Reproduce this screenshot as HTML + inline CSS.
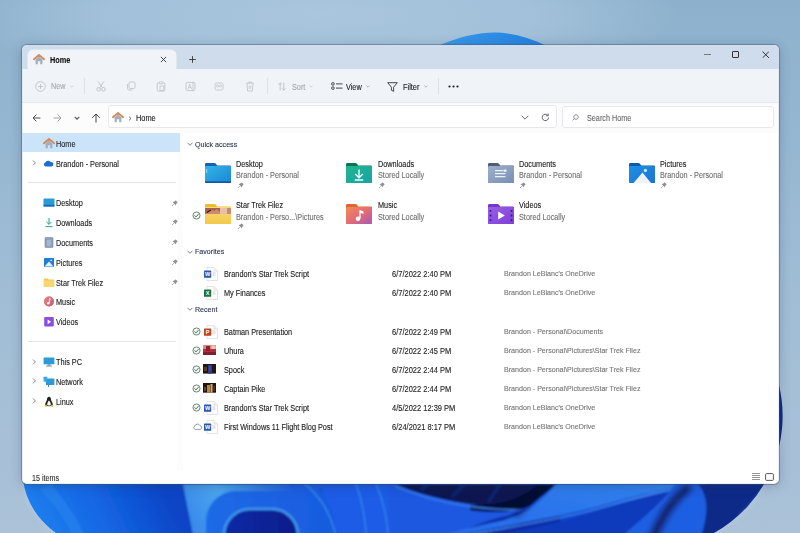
<!DOCTYPE html>
<html><head><meta charset="utf-8">
<style>
*{margin:0;padding:0;box-sizing:border-box}
html,body{width:800px;height:533px;overflow:hidden;background:#8fb2ce;font-family:"Liberation Sans",sans-serif;color:#1b1b1b}
#wall{position:absolute;left:0;top:0;width:800px;height:533px}
#win{position:absolute;left:22px;top:45px;width:757px;height:439px;border-radius:5px;overflow:hidden;background:#fff;box-shadow:0 0 0 1px rgba(70,80,95,.42),0 2px 12px rgba(30,50,80,.28)}
#win:after{content:"";position:absolute;left:0;top:0;right:0;bottom:0;border-radius:5px;border:1px solid rgba(215,225,242,.55);pointer-events:none}
.abs{position:absolute}
.t{position:absolute;white-space:nowrap;font-size:7.5px;line-height:10px;-webkit-text-stroke:.12px currentColor;transform-origin:0 50%;transform:scaleX(.88)}
#title{left:0;top:0;width:757px;height:24px;background:#cedceb}
#toolbar{left:0;top:24px;width:757px;height:34px;background:#f0f3f8;border-bottom:1px solid #e3e8ef}
#addr{left:0;top:58px;width:757px;height:30px;background:#fcfcfd}
#side{left:0;top:88px;width:157px;height:341px;background:#fff}
#content{left:157px;top:88px;width:600px;height:341px;background:#fff}
#status{left:0;top:424px;width:757px;height:15px;background:#fff}
</style></head><body>
<svg id="wall" width="800" height="533" viewBox="0 0 800 533">
  <defs>
    <linearGradient id="bg" x1="0" y1="0" x2="0" y2="1">
      <stop offset="0" stop-color="#8db1cd"/>
      <stop offset="0.55" stop-color="#a0bdd5"/>
      <stop offset="1" stop-color="#abc2d8"/>
    </linearGradient>
    <linearGradient id="bL" gradientUnits="userSpaceOnUse" x1="40" y1="540" x2="160" y2="480">
      <stop offset="0" stop-color="#1d80ee"/>
      <stop offset="0.5" stop-color="#1466e4"/>
      <stop offset="1" stop-color="#0a44c6"/>
    </linearGradient>
    <linearGradient id="dome" x1="0" y1="0" x2="1" y2="0">
      <stop offset="0" stop-color="#3a9ae8"/>
      <stop offset="1" stop-color="#2280e0"/>
    </linearGradient>
    <linearGradient id="band" x1="0" y1="1" x2="1" y2="0">
      <stop offset="0" stop-color="#2466ec"/>
      <stop offset="1" stop-color="#3284ec"/>
    </linearGradient>
    <linearGradient id="a1" x1="0" y1="0" x2="1" y2="0">
      <stop offset="0" stop-color="#1f6ae6"/>
      <stop offset="1" stop-color="#1656dc"/>
    </linearGradient>
    <linearGradient id="a2" x1="0" y1="0" x2="1" y2="0">
      <stop offset="0" stop-color="#0c2aa8"/>
      <stop offset="1" stop-color="#0a1c8a"/>
    </linearGradient>
    <radialGradient id="glow" gradientUnits="userSpaceOnUse" cx="320" cy="15" r="360" gradientTransform="translate(320 15) scale(1 .2) translate(-320 -15)">
      <stop offset="0" stop-color="#a9c6de" stop-opacity="1"/>
      <stop offset=".6" stop-color="#a6c3db" stop-opacity=".85"/>
      <stop offset="1" stop-color="#a6c3db" stop-opacity="0"/>
    </radialGradient>
    <linearGradient id="band1" gradientUnits="userSpaceOnUse" x1="185" y1="540" x2="290" y2="484">
      <stop offset="0" stop-color="#3580e8"/>
      <stop offset=".45" stop-color="#4aa6ee"/>
      <stop offset="1" stop-color="#1f5fe0"/>
    </linearGradient>
    <filter id="bl" x="-5%" y="-5%" width="110%" height="110%"><feGaussianBlur stdDeviation="0.9"/></filter>
    <filter id="bl2" x="-20%" y="-20%" width="140%" height="140%"><feGaussianBlur stdDeviation="3"/></filter>
    <clipPath id="bloomclip"><path d="M23 480 C26 502 38 520 56 533 L714 533 A134 134 0 0 0 779 385 L779 360 Z"/></clipPath>
  </defs>
  <rect width="800" height="533" fill="url(#bg)"/>
  <rect x="0" y="0" width="800" height="120" fill="url(#glow)"/>
  <path d="M23 480 C26 502 38 520 56 533 L714 533 A134 134 0 0 0 779 385 L779 360 Z" fill="#d0deeb" filter="url(#bl2)" opacity=".35"/>
  <path d="M438 46 C460 36 480 32.5 494 32.5 C510 32.5 528 37 547 46 Z" fill="url(#dome)"/>
  <g clip-path="url(#bloomclip)" filter="url(#bl)">
    <rect x="0" y="360" width="800" height="200" fill="#0d45cc"/>
    <rect x="700" y="360" width="100" height="124" fill="#0c2a84"/>
    <rect x="0" y="470" width="200" height="90" fill="url(#bL)"/>
    <path d="M40 490 C55 505 68 520 75 545 L88 545 C80 520 66 503 52 484 Z" fill="#3a96f4" opacity=".3"/>
    <path d="M183 484 Q187 505 195 545 L320 545 L320 484 Z" fill="url(#band1)"/>
    <!-- arch 1 -->
    <rect x="206" y="491" width="170" height="90" rx="30" fill="url(#a1)"/>
    <!-- arch 2 -->
    <rect x="224" y="509" width="74" height="60" rx="26" fill="url(#a2)" stroke="#3f96ee" stroke-width="2.6"/>
    <!-- petals 300-400 -->
    <path d="M318 484 L395 484 C392 500 390 515 392 545 L340 545 C334 515 328 498 318 484 Z" fill="#1b5ce6"/>
    <path d="M305 484 C322 498 332 515 338 545" fill="none" stroke="#3a8cf0" stroke-width="1.3"/>
    <path d="M356 484 C362 500 365 515 367 545" fill="none" stroke="#3c8ef2" stroke-width="1.1"/>
    <path d="M376 484 C383 500 387 515 389 545" fill="none" stroke="#3c8ef2" stroke-width="1.1"/>
    <!-- region 390-560 -->
    <path d="M388 484 L560 484 L560 545 L392 545 Z" fill="#1b58e0"/>
    <path d="M395 484 C425 497 470 507 520 508 C538 500 548 492 556 484 Z" fill="#081450"/>
    <path d="M430 484 L420 490 M465 484 L452 497 M500 484 L488 503" stroke="#10236e" stroke-width="4"/>
    <path d="M470 510 C495 514 515 512 530 506 C540 498 548 490 556 484 L540 484 C520 500 500 506 470 505 Z" fill="#040a30"/>
    <path d="M395 486 C428 500 472 510 522 510" fill="none" stroke="#3a7cf0" stroke-width="1.6"/>
    <path d="M440 545 C470 522 500 518 520 512 C540 504 550 496 560 484 L560 545 Z" fill="#0a2fa8"/>
    <!-- bright sweeping band -->
    <path d="M420 545 C480 528 540 522 600 506 C640 494 670 488 705 484 L556 484 C545 498 530 512 505 520 C480 526 450 530 420 545 Z" fill="url(#band)"/>
    <path d="M420 545 C480 530 545 524 600 508 C640 496 670 489 705 484" fill="none" stroke="#4a94f4" stroke-width="1.3"/>
    <path d="M460 545 C530 528 560 524 600 510 C640 498 670 490 705 484 L705 545 Z" fill="#0b3bbb"/>
    <path d="M540 484 C535 495 528 505 515 516" fill="none" stroke="#06103e" stroke-width="3" filter="url(#bl2)"/>
    <!-- right petal -->
    <path d="M612 545 C640 520 660 505 675 484 L705 484 C712 500 708 520 700 545 Z" fill="#1f5fe2"/>
    <path d="M650 545 C662 515 672 500 690 486" fill="none" stroke="#071450" stroke-width="7" filter="url(#bl2)"/>
    <path d="M698 484 C710 498 708 518 698 545 L717 545 C745 512 765 490 779 460 L790 484 Z" fill="#0d2c88"/>
    <path d="M712 545 C738 515 756 500 772 475" fill="none" stroke="#14379a" stroke-width="3"/>
  </g>
  </svg>
<div id="win">
  <div id="title" class="abs"></div>
  <!-- tab -->
  <div class="abs" style="left:6px;top:5px;width:148px;height:19px;background:#f0f3f8;border-radius:5px 5px 0 0;box-shadow:0 0 0 .5px rgba(255,255,255,.6)"></div>
  <svg class="abs" style="left:11px;top:9px" width="12" height="11" viewBox="0 0 12 11">
    <path d="M1 5.2 L6 1 L11 5.2" fill="none" stroke="#d48c5e" stroke-width="2" stroke-linejoin="round" stroke-linecap="round"/>
    <path d="M2.6 5.6 L6 2.8 L9.4 5.6 V10.2 H7.2 V7.3 H4.8 V10.2 H2.6Z" fill="#a3adbd"/>
  </svg>
  <div class="t" style="left:27.6px;top:9.6px;font-weight:700;font-size:8.30px;color:#111">Home</div>
  <svg class="abs" style="left:138px;top:11px" width="7" height="7" viewBox="0 0 7 7"><path d="M.9 .9L6.1 6.1M6.1 .9L.9 6.1" stroke="#333" stroke-width=".9"/></svg>
  <svg class="abs" style="left:167px;top:11px" width="7" height="7" viewBox="0 0 7 7"><path d="M3.5 .2V6.8M.2 3.5H6.8" stroke="#333" stroke-width=".9"/></svg>
  <!-- window controls -->
  <div class="abs" style="left:682px;top:8.5px;width:7px;height:.8px;background:#7a7a7a"></div>
  <div class="abs" style="left:710.2px;top:6px;width:6.8px;height:6.6px;border:1px solid #333;border-radius:1px"></div>
  <svg class="abs" style="left:739.5px;top:5.5px" width="7.5" height="7.5" viewBox="0 0 7.5 7.5"><path d="M.6 .6L6.9 6.9M6.9 .6L.6 6.9" stroke="#222" stroke-width=".9"/></svg>

  <div id="toolbar" class="abs"></div>
  <!-- New -->
  <svg class="abs" style="left:12.5px;top:35.5px" width="11" height="11" viewBox="0 0 11 11"><circle cx="5.5" cy="5.5" r="4.8" fill="none" stroke="#b9bdc4" stroke-width=".8"/><path d="M5.5 3V8M3 5.5H8" stroke="#b9bdc4" stroke-width=".8"/></svg>
  <div class="t" style="left:29px;top:36.6px;color:#a6a9ae;font-size:8.18px">New</div>
  <svg class="abs" style="left:47.5px;top:39.5px" width="4" height="3" viewBox="0 0 4 3"><path d="M.4 .6L2 2.2L3.6 .6" fill="none" stroke="#b9bdc4" stroke-width=".6"/></svg>
  <div class="abs" style="left:61.5px;top:33px;width:.7px;height:16px;background:#dde1e7"></div>
  <!-- cut -->
  <svg class="abs" style="left:73.5px;top:35.5px" width="10" height="11" viewBox="0 0 10 11"><circle cx="2.6" cy="8.3" r="1.8" fill="none" stroke="#b6bcc4" stroke-width=".8"/><circle cx="7.4" cy="8.3" r="1.8" fill="none" stroke="#b6bcc4" stroke-width=".8"/><path d="M3.6 6.8L7.8 .5M6.4 6.8L2.2 .5" stroke="#b6bcc4" stroke-width=".8"/></svg>
  <!-- copy -->
  <svg class="abs" style="left:104px;top:36px" width="10" height="10" viewBox="0 0 10 10"><rect x="3" y="1" width="6" height="6.5" rx="1.2" fill="none" stroke="#bcc1c8" stroke-width=".8"/><path d="M1.5 3V7.5A1.5 1.5 0 0 0 3 9H6.5" fill="none" stroke="#bcc1c8" stroke-width=".8"/></svg>
  <!-- paste -->
  <svg class="abs" style="left:134px;top:35.5px" width="10" height="11" viewBox="0 0 10 11"><rect x="1.2" y="1.8" width="7.6" height="8.4" rx="1.2" fill="none" stroke="#bcc1c8" stroke-width=".8"/><rect x="3.3" y=".8" width="3.4" height="2" rx=".6" fill="#f0f3f8" stroke="#bcc1c8" stroke-width=".7"/><rect x="4" y="5" width="3.5" height="4.5" fill="none" stroke="#bcc1c8" stroke-width=".7"/></svg>
  <!-- rename -->
  <svg class="abs" style="left:163px;top:35.5px" width="11" height="11" viewBox="0 0 11 11"><rect x="1" y="1.5" width="9" height="8" rx="1.2" fill="none" stroke="#bcc1c8" stroke-width=".8"/><path d="M3 8L4.8 3L6.6 8M3.6 6.4H6" fill="none" stroke="#bcc1c8" stroke-width=".7"/><path d="M8 .5V10.5" stroke="#bcc1c8" stroke-width=".8"/></svg>
  <!-- share -->
  <svg class="abs" style="left:192px;top:36px" width="10" height="10" viewBox="0 0 10 10"><rect x="1" y="2" width="8" height="7" rx="1.5" fill="none" stroke="#bcc1c8" stroke-width=".8"/><circle cx="3.5" cy="5" r="1.1" fill="none" stroke="#bcc1c8" stroke-width=".7"/><circle cx="6.5" cy="5" r="1.1" fill="none" stroke="#bcc1c8" stroke-width=".7"/></svg>
  <!-- delete -->
  <svg class="abs" style="left:223px;top:35.5px" width="10" height="11" viewBox="0 0 10 11"><path d="M1 2.2H9M3.8 2.2V1H6.2V2.2M2 2.2L2.6 10H7.4L8 2.2" fill="none" stroke="#bcc1c8" stroke-width=".8"/><path d="M4.2 4.5V8M5.8 4.5V8" stroke="#bcc1c8" stroke-width=".7"/></svg>
  <div class="abs" style="left:244.5px;top:33px;width:.7px;height:16px;background:#dde1e7"></div>
  <!-- sort -->
  <svg class="abs" style="left:255.5px;top:36.5px" width="8" height="9" viewBox="0 0 8 9"><path d="M2.2 8.5V.8M.4 2.6L2.2 .8L4 2.6M5.8 .5V8.2M4 6.4L5.8 8.2L7.6 6.4" fill="none" stroke="#b6bcc4" stroke-width=".8"/></svg>
  <div class="t" style="left:269.5px;top:36.8px;color:#a6a9ae;font-size:8.30px">Sort</div>
  <svg class="abs" style="left:287px;top:39.5px" width="4" height="3" viewBox="0 0 4 3"><path d="M.4 .6L2 2.2L3.6 .6" fill="none" stroke="#b9bdc4" stroke-width=".6"/></svg>
  <!-- view -->
  <svg class="abs" style="left:308.5px;top:37px" width="12" height="8" viewBox="0 0 12 8"><rect x=".6" y=".6" width="2.6" height="2.6" rx="1.2" fill="none" stroke="#333" stroke-width=".9"/><rect x=".6" y="4.8" width="2.6" height="2.6" rx="1.2" fill="none" stroke="#333" stroke-width=".9"/><path d="M5 1.9H11.5M5 6.1H11.5" stroke="#333" stroke-width=".9"/></svg>
  <div class="t" style="left:324.2px;top:36.5px;color:#1b1b1b;font-size:8.30px">View</div>
  <svg class="abs" style="left:344px;top:39.5px" width="4" height="3" viewBox="0 0 4 3"><path d="M.4 .6L2 2.2L3.6 .6" fill="none" stroke="#888" stroke-width=".6"/></svg>
  <!-- filter -->
  <svg class="abs" style="left:365.3px;top:36.5px" width="11" height="10" viewBox="0 0 11 10"><path d="M.7 .7H10.3L6.6 5.2V9.3L4.4 8.2V5.2Z" fill="none" stroke="#333" stroke-width=".9" stroke-linejoin="round"/></svg>
  <div class="t" style="left:380.6px;top:36.5px;color:#1b1b1b;font-size:8.41px">Filter</div>
  <svg class="abs" style="left:401.5px;top:39.5px" width="4" height="3" viewBox="0 0 4 3"><path d="M.4 .6L2 2.2L3.6 .6" fill="none" stroke="#888" stroke-width=".6"/></svg>
  <div class="abs" style="left:416.4px;top:33px;width:.7px;height:16px;background:#dde1e7"></div>
  <!-- more -->
  <svg class="abs" style="left:426px;top:39.5px" width="11" height="3" viewBox="0 0 11 3"><circle cx="1.5" cy="1.5" r="1.1" fill="#222"/><circle cx="5.5" cy="1.5" r="1.1" fill="#222"/><circle cx="9.5" cy="1.5" r="1.1" fill="#222"/></svg>

  <div id="addr" class="abs"></div>
  <!-- nav arrows -->
  <svg class="abs" style="left:9.5px;top:68.5px" width="9" height="8" viewBox="0 0 9 8"><path d="M8.4 4H1M4.4 .6L1 4L4.4 7.4" fill="none" stroke="#444" stroke-width=".95"/></svg>
  <svg class="abs" style="left:31px;top:68.5px" width="9" height="8" viewBox="0 0 9 8"><path d="M.6 4H8M4.6 .6L8 4L4.6 7.4" fill="none" stroke="#9a9a9a" stroke-width=".9"/></svg>
  <svg class="abs" style="left:51.5px;top:70.5px" width="6" height="4" viewBox="0 0 6 4"><path d="M.7 .8L3 3.1L5.3 .8" fill="none" stroke="#555" stroke-width="1.15"/></svg>
  <svg class="abs" style="left:68.8px;top:67.5px" width="10" height="10" viewBox="0 0 10 10"><path d="M5 9.5V1M1.2 4.8L5 1L8.8 4.8" fill="none" stroke="#333" stroke-width=".9"/></svg>
  <!-- address box -->
  <div class="abs" style="left:86px;top:59.5px;width:449px;height:23.5px;background:#fff;border:1px solid #e6e8eb;border-radius:3px"></div>
  <svg class="abs" style="left:90px;top:67px" width="12" height="11" viewBox="0 0 12 11">
    <path d="M1 5.2 L6 1 L11 5.2" fill="none" stroke="#d48c5e" stroke-width="2" stroke-linejoin="round" stroke-linecap="round"/>
    <path d="M2.6 5.6 L6 2.8 L9.4 5.6 V10.2 H7.2 V7.3 H4.8 V10.2 H2.6Z" fill="#a3adbd"/>
  </svg>
  <svg class="abs" style="left:105.5px;top:70.5px" width="4" height="5" viewBox="0 0 4 5"><path d="M1 .6L3 2.5L1 4.4" fill="none" stroke="#444" stroke-width=".8"/></svg>
  <div class="t" style="left:114px;top:67.5px;font-size:8.41px;color:#1b1b1b">Home</div>
  <svg class="abs" style="left:499px;top:70px" width="8" height="5" viewBox="0 0 8 5"><path d="M.7 .8L4 4.1L7.3 .8" fill="none" stroke="#555" stroke-width=".9"/></svg>
  <svg class="abs" style="left:519px;top:67.5px" width="9" height="9" viewBox="0 0 9 9"><path d="M7.6 4.5A3.2 3.2 0 1 1 6.6 2.1" fill="none" stroke="#555" stroke-width=".9"/><path d="M7.2 .6V2.8H5" fill="none" stroke="#555" stroke-width=".9"/></svg>
  <!-- search box -->
  <div class="abs" style="left:540.3px;top:61px;width:212px;height:22px;background:#fff;border:1px solid #e6e8eb;border-radius:3px"></div>
  <svg class="abs" style="left:549.5px;top:69px" width="7" height="7" viewBox="0 0 7 7"><circle cx="4" cy="3" r="2.3" fill="none" stroke="#777" stroke-width=".8"/><path d="M2.3 4.7L.6 6.4" stroke="#777" stroke-width=".8"/></svg>
  <div class="t" style="left:564.8px;top:68.5px;font-size:8.24px;color:#6b6b6b">Search Home</div>















<!--GEN--><div class="abs" style="left:154.5px;top:88px;width:6px;height:338px;background:#fcfcfc"></div>
<div class="abs" style="left:0;top:88.3px;width:157.5px;height:19.1px;background:#cce4f9"></div>
<svg class="abs" style="left:20.5px;top:92.8px" width="12" height="11" viewBox="0 0 12 11"><path d="M1 5.2 L6 1 L11 5.2" fill="none" stroke="#d48c5e" stroke-width="2" stroke-linejoin="round" stroke-linecap="round"/><path d="M2.6 5.6 L6 2.8 L9.4 5.6 V10.2 H7.2 V7.3 H4.8 V10.2 H2.6Z" fill="#a3adbd"/></svg>
<div class="t" style="left:33.7px;top:93.80px;font-size:8.30px;color:#1a1f2c;font-weight:400;">Home</div>
<svg class="abs" style="left:9.5px;top:115.3px" width="4" height="6" viewBox="0 0 4 6"><path d="M1 .5L3.4 2.9L1 5.3" fill="none" stroke="#808080" stroke-width=".95"/></svg>
<svg class="abs" style="left:21px;top:114.5px" width="11" height="7" viewBox="0 0 11 7"><path d="M2.6 6.6A2.2 2.2 0 0 1 2.3 2.4A3 3 0 0 1 7.6 2.1A2.3 2.3 0 0 1 8.6 6.6Z" fill="#1a6fd0"/></svg>
<div class="t" style="left:33.7px;top:113.50px;font-size:8.30px;color:#1b1b1b;font-weight:400;">Brandon - Personal</div>
<div class="abs" style="left:6px;top:137.1px;width:148px;height:.8px;background:#e2e4e7"></div>
<svg class="abs" style="left:21px;top:152.2px" width="12" height="11" viewBox="0 0 12 11"><rect x=".5" y="1.5" width="11" height="8" rx="1" fill="#2a9ad8"/><rect x=".5" y="7.8" width="11" height="1.7" fill="#1468b8"/></svg>
<div class="t" style="left:33.7px;top:153.20px;font-size:8.30px;color:#1b1b1b;font-weight:400;">Desktop</div>
<svg class="abs" style="left:148.5px;top:153.7px" width="8" height="8" viewBox="0 0 8 8"><path d="M4.6 1.2L6.8 3.4L6 3.8L4.9 5.8L5 6.5L1.5 3L2.2 3.1L4.2 2Z" fill="#8f8f8f"/><path d="M2.8 5.2L1 7" stroke="#9a9a9a" stroke-width=".8"/></svg>
<svg class="abs" style="left:21px;top:171.9px" width="12" height="11" viewBox="0 0 12 11"><path d="M6 1V7.2M3.4 4.8L6 7.4L8.6 4.8M2.5 9.6H9.5" fill="none" stroke="#1aa58a" stroke-width="1"/></svg>
<div class="t" style="left:33.7px;top:172.90px;font-size:8.30px;color:#1b1b1b;font-weight:400;">Downloads</div>
<svg class="abs" style="left:148.5px;top:173.4px" width="8" height="8" viewBox="0 0 8 8"><path d="M4.6 1.2L6.8 3.4L6 3.8L4.9 5.8L5 6.5L1.5 3L2.2 3.1L4.2 2Z" fill="#8f8f8f"/><path d="M2.8 5.2L1 7" stroke="#9a9a9a" stroke-width=".8"/></svg>
<svg class="abs" style="left:21px;top:191.5px" width="12" height="11" viewBox="0 0 12 11"><rect x="2" y=".6" width="8" height="10" rx=".8" fill="#8fa3bf"/><rect x="2" y=".6" width="8" height="10" rx=".8" fill="none" stroke="#6f84a3" stroke-width=".6"/><path d="M4 4H8M4 6H8M4 8H7" stroke="#dfe6ef" stroke-width=".6"/></svg>
<div class="t" style="left:33.7px;top:192.50px;font-size:8.30px;color:#1b1b1b;font-weight:400;">Documents</div>
<svg class="abs" style="left:148.5px;top:193px" width="8" height="8" viewBox="0 0 8 8"><path d="M4.6 1.2L6.8 3.4L6 3.8L4.9 5.8L5 6.5L1.5 3L2.2 3.1L4.2 2Z" fill="#8f8f8f"/><path d="M2.8 5.2L1 7" stroke="#9a9a9a" stroke-width=".8"/></svg>
<svg class="abs" style="left:21px;top:211.5px" width="12" height="11" viewBox="0 0 12 11"><rect x="1" y="1" width="10" height="9" rx=".8" fill="#1f7fd6"/><path d="M1.5 9.5L6 4.6L10.5 9.5Z" fill="#e6eef8"/><circle cx="8.2" cy="3.3" r=".9" fill="#cfe6fb"/></svg>
<div class="t" style="left:33.7px;top:212.50px;font-size:8.30px;color:#1b1b1b;font-weight:400;">Pictures</div>
<svg class="abs" style="left:148.5px;top:213px" width="8" height="8" viewBox="0 0 8 8"><path d="M4.6 1.2L6.8 3.4L6 3.8L4.9 5.8L5 6.5L1.5 3L2.2 3.1L4.2 2Z" fill="#8f8f8f"/><path d="M2.8 5.2L1 7" stroke="#9a9a9a" stroke-width=".8"/></svg>
<svg class="abs" style="left:21px;top:231.5px" width="12" height="11" viewBox="0 0 12 11"><path d="M.8 2.2Q.8 1.4 1.6 1.4H4.6L5.6 2.4H10.6Q11.2 2.4 11.2 3V9.4Q11.2 10 10.6 10H1.4Q.8 10 .8 9.4Z" fill="#f2c94c"/><rect x=".8" y="3.6" width="10.4" height="6.4" rx=".6" fill="#f7d774"/></svg>
<div class="t" style="left:33.7px;top:232.50px;font-size:8.30px;color:#1b1b1b;font-weight:400;">Star Trek Filez</div>
<svg class="abs" style="left:148.5px;top:233px" width="8" height="8" viewBox="0 0 8 8"><path d="M4.6 1.2L6.8 3.4L6 3.8L4.9 5.8L5 6.5L1.5 3L2.2 3.1L4.2 2Z" fill="#8f8f8f"/><path d="M2.8 5.2L1 7" stroke="#9a9a9a" stroke-width=".8"/></svg>
<svg class="abs" style="left:21px;top:251.2px" width="12" height="11" viewBox="0 0 12 11"><circle cx="6" cy="5.5" r="4.9" fill="#e0707a"/><circle cx="6" cy="5.5" r="4.9" fill="url(#musg)"/><path d="M6.4 2.6V7.2" stroke="#fff" stroke-width=".9"/><circle cx="5.2" cy="7.3" r="1.2" fill="#fff"/><path d="M6.4 2.6L8 3.4" stroke="#fff" stroke-width=".8"/></svg>
<div class="t" style="left:33.7px;top:252.20px;font-size:8.30px;color:#1b1b1b;font-weight:400;">Music</div>
<svg class="abs" style="left:21px;top:270.9px" width="12" height="11" viewBox="0 0 12 11"><rect x="1.2" y="1" width="9.6" height="9.6" rx="1" fill="#8a4fe0"/><path d="M4.6 3.4L8 5.8L4.6 8.2Z" fill="#fff"/></svg>
<div class="t" style="left:33.7px;top:271.90px;font-size:8.30px;color:#1b1b1b;font-weight:400;">Videos</div>
<div class="abs" style="left:6px;top:295.85px;width:148px;height:.8px;background:#e2e4e7"></div>
<svg class="abs" style="left:9.5px;top:313.7px" width="4" height="6" viewBox="0 0 4 6"><path d="M1 .5L3.4 2.9L1 5.3" fill="none" stroke="#808080" stroke-width=".95"/></svg>
<svg class="abs" style="left:21px;top:310.9px" width="12" height="11" viewBox="0 0 12 11"><rect x=".6" y="1.5" width="10.8" height="6.8" rx=".6" fill="#2a9ad8"/><rect x="4.5" y="8.3" width="3" height="1.4" fill="#6b8fb0"/><rect x="3" y="9.6" width="6" height=".9" fill="#6b8fb0"/></svg>
<div class="t" style="left:33.7px;top:311.90px;font-size:8.30px;color:#1b1b1b;font-weight:400;">This PC</div>
<svg class="abs" style="left:9.5px;top:333.3px" width="4" height="6" viewBox="0 0 4 6"><path d="M1 .5L3.4 2.9L1 5.3" fill="none" stroke="#808080" stroke-width=".95"/></svg>
<svg class="abs" style="left:21px;top:330.5px" width="12" height="11" viewBox="0 0 12 11"><rect x="3" y="2.5" width="8.4" height="6.5" rx=".5" fill="#2a9ad8"/><rect x=".6" y=".8" width="3.6" height="5" rx=".4" fill="#3aa8e4"/><path d="M5.5 9V11" stroke="#4a6f90" stroke-width=".9"/></svg>
<div class="t" style="left:33.7px;top:331.50px;font-size:8.30px;color:#1b1b1b;font-weight:400;">Network</div>
<svg class="abs" style="left:9.5px;top:353.3px" width="4" height="6" viewBox="0 0 4 6"><path d="M1 .5L3.4 2.9L1 5.3" fill="none" stroke="#808080" stroke-width=".95"/></svg>
<svg class="abs" style="left:21px;top:350.5px" width="12" height="11" viewBox="0 0 12 11"><path d="M6 .8C4.5.8 4 2.3 4 3.6C4 5 2.2 6.5 2.2 8.6C2.2 9.6 3 10.2 6 10.2C9 10.2 9.8 9.6 9.8 8.6C9.8 6.5 8 5 8 3.6C8 2.3 7.5.8 6 .8Z" fill="#222"/><path d="M6 4.5C5 5.5 4.2 7 4.2 8.4C4.2 9.3 5 9.5 6 9.5C7 9.5 7.8 9.3 7.8 8.4C7.8 7 7 5.5 6 4.5Z" fill="#f4f4f4"/><path d="M1.6 9.2L3.5 8.6L4.3 10.5L2.3 10.8Z M10.4 9.2L8.5 8.6L7.7 10.5L9.7 10.8Z" fill="#e6b422"/></svg>
<div class="t" style="left:33.7px;top:351.50px;font-size:8.30px;color:#1b1b1b;font-weight:400;">Linux</div>
<svg class="abs" style="left:164.5px;top:97.0px" width="6" height="4" viewBox="0 0 6 4"><path d="M.5 .8L3 3.3L5.5 .8" fill="none" stroke="#737885" stroke-width=".95"/></svg>
<div class="t" style="left:173.2px;top:94.70px;font-size:8.07px;color:#2a3350;font-weight:400;">Quick access</div>
<svg class="abs" style="left:164.5px;top:204.7px" width="6" height="4" viewBox="0 0 6 4"><path d="M.5 .8L3 3.3L5.5 .8" fill="none" stroke="#737885" stroke-width=".95"/></svg>
<div class="t" style="left:173.2px;top:202.40px;font-size:8.07px;color:#2a3350;font-weight:400;">Favorites</div>
<svg class="abs" style="left:164.5px;top:262.0px" width="6" height="4" viewBox="0 0 6 4"><path d="M.5 .8L3 3.3L5.5 .8" fill="none" stroke="#737885" stroke-width=".95"/></svg>
<div class="t" style="left:173.2px;top:259.70px;font-size:8.07px;color:#2a3350;font-weight:400;">Recent</div>
<svg class="abs" style="left:0;top:0" width="0" height="0"><defs>
<linearGradient id="gDesk" x1="0" y1="0" x2="1" y2="1"><stop offset="0" stop-color="#35b4e8"/><stop offset="1" stop-color="#1a86d2"/></linearGradient>
<linearGradient id="gDown" x1="0" y1="0" x2="1" y2="1"><stop offset="0" stop-color="#22b58e"/><stop offset="1" stop-color="#17a3a6"/></linearGradient>
<linearGradient id="gDoc" x1="0" y1="0" x2="1" y2="1"><stop offset="0" stop-color="#9db0ca"/><stop offset="1" stop-color="#7890b2"/></linearGradient>
<linearGradient id="gPic" x1="0" y1="0" x2="1" y2="1"><stop offset="0" stop-color="#1f8fe2"/><stop offset="1" stop-color="#1a74d4"/></linearGradient>
<linearGradient id="gMus" x1="0" y1="0" x2="1" y2="1"><stop offset="0" stop-color="#f58a54"/><stop offset=".55" stop-color="#e06a78"/><stop offset="1" stop-color="#a45ab8"/></linearGradient>
<linearGradient id="gVid" x1="0" y1="0" x2="1" y2="1"><stop offset="0" stop-color="#9a5fe8"/><stop offset="1" stop-color="#7d3fd6"/></linearGradient>
<linearGradient id="gStar" x1="0" y1="0" x2="0" y2="1"><stop offset="0" stop-color="#f9dc7c"/><stop offset="1" stop-color="#f3c84a"/></linearGradient>
<linearGradient id="musg" x1="0" y1="0" x2="1" y2="1"><stop offset="0" stop-color="#f0806a"/><stop offset="1" stop-color="#c45a8a"/></linearGradient>
</defs></svg>
<svg class="abs" style="left:182.6px;top:117.8px" width="26" height="20" viewBox="0 0 26 20"><path d="M0 1.4Q0 0 1.4 0H9.4Q10.2 0 10.7 .6L12.2 2.6H24.8Q26 2.6 26 3.8V18.8Q26 20 24.8 20H1.2Q0 20 0 18.8Z" fill="#1462b4"/><path d="M0 4.2Q0 2.9 1.3 2.9H24.7Q26 2.9 26 4.2V18.8Q26 20 24.8 20H1.2Q0 20 0 18.8Z" fill="url(#gDesk)"/><rect x="1" y="6" width="1.2" height="4" fill="#8fe0ff" opacity=".8"/><rect x="0" y="18.2" width="26" height="1.8" rx=".8" fill="#125aa8"/></svg>
<div class="t" style="left:214.3px;top:113.80px;font-size:8.30px;color:#1b1b1b;font-weight:400;">Desktop</div>
<div class="t" style="left:214.3px;top:124.90px;font-size:8.30px;color:#707070;font-weight:400;">Brandon - Personal</div>
<svg class="abs" style="left:214.5px;top:135.7px" width="8" height="8" viewBox="0 0 8 8"><path d="M4.6 1.2L6.8 3.4L6 3.8L4.9 5.8L5 6.5L1.5 3L2.2 3.1L4.2 2Z" fill="#8f8f8f"/><path d="M2.8 5.2L1 7" stroke="#9a9a9a" stroke-width=".8"/></svg>
<svg class="abs" style="left:324.2px;top:117.8px" width="26" height="20" viewBox="0 0 26 20"><path d="M0 1.4Q0 0 1.4 0H9.4Q10.2 0 10.7 .6L12.2 2.6H24.8Q26 2.6 26 3.8V18.8Q26 20 24.8 20H1.2Q0 20 0 18.8Z" fill="#0b7256"/><path d="M0 4.2Q0 2.9 1.3 2.9H24.7Q26 2.9 26 4.2V18.8Q26 20 24.8 20H1.2Q0 20 0 18.8Z" fill="url(#gDown)"/><path d="M13 6.5V14.5M9.2 11L13 14.8L16.8 11M8.8 17H17.2" fill="none" stroke="#e8fff8" stroke-width="1.4"/></svg>
<div class="t" style="left:355.6px;top:113.80px;font-size:8.30px;color:#1b1b1b;font-weight:400;">Downloads</div>
<div class="t" style="left:355.6px;top:124.90px;font-size:8.30px;color:#707070;font-weight:400;">Stored Locally</div>
<svg class="abs" style="left:355.8px;top:135.7px" width="8" height="8" viewBox="0 0 8 8"><path d="M4.6 1.2L6.8 3.4L6 3.8L4.9 5.8L5 6.5L1.5 3L2.2 3.1L4.2 2Z" fill="#8f8f8f"/><path d="M2.8 5.2L1 7" stroke="#9a9a9a" stroke-width=".8"/></svg>
<svg class="abs" style="left:465.8px;top:117.8px" width="26" height="20" viewBox="0 0 26 20"><path d="M0 1.4Q0 0 1.4 0H9.4Q10.2 0 10.7 .6L12.2 2.6H24.8Q26 2.6 26 3.8V18.8Q26 20 24.8 20H1.2Q0 20 0 18.8Z" fill="#4b5f7c"/><path d="M0 4.2Q0 2.9 1.3 2.9H24.7Q26 2.9 26 4.2V18.8Q26 20 24.8 20H1.2Q0 20 0 18.8Z" fill="url(#gDoc)"/><path d="M7 7.6H15M7 10.6H17.5M7 13.6H17.5" stroke="#eef3f9" stroke-width="1.1"/><rect x="15.5" y="6.6" width="3" height="2.2" fill="#eef3f9"/></svg>
<div class="t" style="left:497px;top:113.80px;font-size:8.30px;color:#1b1b1b;font-weight:400;">Documents</div>
<div class="t" style="left:497px;top:124.90px;font-size:8.30px;color:#707070;font-weight:400;">Brandon - Personal</div>
<svg class="abs" style="left:497.2px;top:135.7px" width="8" height="8" viewBox="0 0 8 8"><path d="M4.6 1.2L6.8 3.4L6 3.8L4.9 5.8L5 6.5L1.5 3L2.2 3.1L4.2 2Z" fill="#8f8f8f"/><path d="M2.8 5.2L1 7" stroke="#9a9a9a" stroke-width=".8"/></svg>
<svg class="abs" style="left:607px;top:117.8px" width="26" height="20" viewBox="0 0 26 20"><path d="M0 1.4Q0 0 1.4 0H9.4Q10.2 0 10.7 .6L12.2 2.6H24.8Q26 2.6 26 3.8V18.8Q26 20 24.8 20H1.2Q0 20 0 18.8Z" fill="#0a5aae"/><path d="M0 4.2Q0 2.9 1.3 2.9H24.7Q26 2.9 26 4.2V18.8Q26 20 24.8 20H1.2Q0 20 0 18.8Z" fill="url(#gPic)"/><path d="M4.5 20L13.5 9.5L22 20Z" fill="#eef2fa"/><circle cx="16.4" cy="7.4" r="1.6" fill="#c8ecff"/></svg>
<div class="t" style="left:638px;top:113.80px;font-size:8.30px;color:#1b1b1b;font-weight:400;">Pictures</div>
<div class="t" style="left:638px;top:124.90px;font-size:8.30px;color:#707070;font-weight:400;">Brandon - Personal</div>
<svg class="abs" style="left:638.2px;top:135.7px" width="8" height="8" viewBox="0 0 8 8"><path d="M4.6 1.2L6.8 3.4L6 3.8L4.9 5.8L5 6.5L1.5 3L2.2 3.1L4.2 2Z" fill="#8f8f8f"/><path d="M2.8 5.2L1 7" stroke="#9a9a9a" stroke-width=".8"/></svg>
<svg class="abs" style="left:182.6px;top:159.2px" width="26" height="20" viewBox="0 0 26 20"><path d="M0 1.4Q0 0 1.4 0H9.4Q10.2 0 10.7 .6L12.2 2.6H24.8Q26 2.6 26 3.8V18.8Q26 20 24.8 20H1.2Q0 20 0 18.8Z" fill="#f0bd2a"/><path d="M0 4.2Q0 2.9 1.3 2.9H24.7Q26 2.9 26 4.2V18.8Q26 20 24.8 20H1.2Q0 20 0 18.8Z" fill="url(#gStar)"/><rect x="0" y="4" width="26" height="6" fill="#a8604a"/><path d="M2 9L6 5.5L9 7L12 5L15 8V4H26V10H0Z" fill="#c98a70"/><path d="M2 8.5L6 6" stroke="#3a1a10" stroke-width="1.2"/><rect x="15" y="4" width="7" height="6" fill="#e8c0a8"/></svg>
<div class="t" style="left:214.3px;top:155.10px;font-size:8.30px;color:#1b1b1b;font-weight:400;">Star Trek Filez</div>
<div class="t" style="left:214.3px;top:166.50px;font-size:8.30px;color:#707070;font-weight:400;">Brandon - Perso...\Pictures</div>
<svg class="abs" style="left:214.5px;top:176.6px" width="8" height="8" viewBox="0 0 8 8"><path d="M4.6 1.2L6.8 3.4L6 3.8L4.9 5.8L5 6.5L1.5 3L2.2 3.1L4.2 2Z" fill="#8f8f8f"/><path d="M2.8 5.2L1 7" stroke="#9a9a9a" stroke-width=".8"/></svg>
<svg class="abs" style="left:324.2px;top:159.2px" width="26" height="20" viewBox="0 0 26 20"><path d="M0 1.4Q0 0 1.4 0H9.4Q10.2 0 10.7 .6L12.2 2.6H24.8Q26 2.6 26 3.8V18.8Q26 20 24.8 20H1.2Q0 20 0 18.8Z" fill="#d9672e"/><path d="M0 4.2Q0 2.9 1.3 2.9H24.7Q26 2.9 26 4.2V18.8Q26 20 24.8 20H1.2Q0 20 0 18.8Z" fill="url(#gMus)"/><path d="M14 6.2V14.6" stroke="#fff" stroke-width="1.3"/><path d="M14 6.2L17.5 7.6V10L14 8.6Z" fill="#fff"/><circle cx="12" cy="14.7" r="2.3" fill="#fff"/></svg>
<div class="t" style="left:355.6px;top:155.10px;font-size:8.30px;color:#1b1b1b;font-weight:400;">Music</div>
<div class="t" style="left:355.6px;top:166.50px;font-size:8.30px;color:#707070;font-weight:400;">Stored Locally</div>
<svg class="abs" style="left:465.8px;top:159.2px" width="26" height="20" viewBox="0 0 26 20"><path d="M0 1.4Q0 0 1.4 0H9.4Q10.2 0 10.7 .6L12.2 2.6H24.8Q26 2.6 26 3.8V18.8Q26 20 24.8 20H1.2Q0 20 0 18.8Z" fill="#7538c6"/><path d="M0 4.2Q0 2.9 1.3 2.9H24.7Q26 2.9 26 4.2V18.8Q26 20 24.8 20H1.2Q0 20 0 18.8Z" fill="url(#gVid)"/><path d="M10.2 7.6L16.8 11.6L10.2 15.6Z" fill="#fff"/><g fill="#3a1a7a"><rect x="1.6" y="6" width="1.8" height="1.8" rx=".5"/><rect x="1.6" y="10.6" width="1.8" height="1.8" rx=".5"/><rect x="1.6" y="15.2" width="1.8" height="1.8" rx=".5"/><rect x="22.6" y="6" width="1.8" height="1.8" rx=".5"/><rect x="22.6" y="10.6" width="1.8" height="1.8" rx=".5"/><rect x="22.6" y="15.2" width="1.8" height="1.8" rx=".5"/></g></svg>
<div class="t" style="left:497px;top:155.10px;font-size:8.30px;color:#1b1b1b;font-weight:400;">Videos</div>
<div class="t" style="left:497px;top:166.50px;font-size:8.30px;color:#707070;font-weight:400;">Stored Locally</div>
<svg class="abs" style="left:170px;top:165.6px" width="9" height="9" viewBox="0 0 9 9"><circle cx="4.5" cy="4.5" r="3.55" fill="#f4faf6" stroke="#587a68" stroke-width=".9"/><path d="M2.5 4.3L4 5.9L6.5 3.1" fill="none" stroke="#4a6c5a" stroke-width="1"/></svg>
<svg class="abs" style="left:181.5px;top:221.8px" width="14" height="14" viewBox="0 0 14 14"><path d="M3 .5H10L13.5 4V13.5H3Z" fill="#fff" stroke="#c8c8c8" stroke-width=".5"/><path d="M10 .5V4H13.5" fill="#f2f2f2" stroke="#c8c8c8" stroke-width=".5"/><rect x="0" y="3.6" width="7.2" height="7.2" rx=".6" fill="#2a5aad"/><text x="3.6" y="9.2" font-size="5.6" font-weight="700" text-anchor="middle" fill="#fff" font-family="Liberation Sans">W</text><path d="M8.5 6H11.5M8.5 8H11.5" stroke="#2a5aad" stroke-width=".6" opacity=".5"/></svg>
<div class="t" style="left:201.9px;top:223.50px;font-size:8.30px;color:#1b1b1b;font-weight:400;">Brandon&#39;s Star Trek Script</div>
<div class="t" style="left:369.5px;top:223.50px;font-size:8.52px;color:#1b1b1b;font-weight:400;">6/7/2022 2:40 PM</div>
<div class="t" style="left:481.6px;top:223.50px;font-size:8.07px;color:#747474;font-weight:400;">Brandon LeBlanc&#39;s OneDrive</div>
<svg class="abs" style="left:181.5px;top:241.0px" width="14" height="14" viewBox="0 0 14 14"><path d="M3 .5H10L13.5 4V13.5H3Z" fill="#fff" stroke="#c8c8c8" stroke-width=".5"/><path d="M10 .5V4H13.5" fill="#f2f2f2" stroke="#c8c8c8" stroke-width=".5"/><rect x="0" y="3.6" width="7.2" height="7.2" rx=".6" fill="#1d7044"/><text x="3.6" y="9.2" font-size="5.6" font-weight="700" text-anchor="middle" fill="#fff" font-family="Liberation Sans">X</text><path d="M8.5 6H11.5M8.5 8H11.5" stroke="#1d7044" stroke-width=".6" opacity=".5"/></svg>
<div class="t" style="left:201.9px;top:242.70px;font-size:8.30px;color:#1b1b1b;font-weight:400;">My Finances</div>
<div class="t" style="left:369.5px;top:242.70px;font-size:8.52px;color:#1b1b1b;font-weight:400;">6/7/2022 2:40 PM</div>
<div class="t" style="left:481.6px;top:242.70px;font-size:8.07px;color:#747474;font-weight:400;">Brandon LeBlanc&#39;s OneDrive</div>
<svg class="abs" style="left:181.5px;top:280.3px" width="14" height="14" viewBox="0 0 14 14"><path d="M3 .5H10L13.5 4V13.5H3Z" fill="#fff" stroke="#c8c8c8" stroke-width=".5"/><path d="M10 .5V4H13.5" fill="#f2f2f2" stroke="#c8c8c8" stroke-width=".5"/><rect x="0" y="3.6" width="7.2" height="7.2" rx=".6" fill="#c4401e"/><text x="3.6" y="9.2" font-size="5.6" font-weight="700" text-anchor="middle" fill="#fff" font-family="Liberation Sans">P</text><path d="M8.5 6H11.5M8.5 8H11.5" stroke="#c4401e" stroke-width=".6" opacity=".5"/></svg>
<svg class="abs" style="left:170px;top:282.2px" width="9" height="9" viewBox="0 0 9 9"><circle cx="4.5" cy="4.5" r="3.55" fill="#f4faf6" stroke="#587a68" stroke-width=".9"/><path d="M2.5 4.3L4 5.9L6.5 3.1" fill="none" stroke="#4a6c5a" stroke-width="1"/></svg>
<div class="t" style="left:201.9px;top:282.00px;font-size:8.30px;color:#1b1b1b;font-weight:400;">Batman Presentation</div>
<div class="t" style="left:369.5px;top:282.00px;font-size:8.52px;color:#1b1b1b;font-weight:400;">6/7/2022 2:49 PM</div>
<div class="t" style="left:481.6px;top:282.00px;font-size:8.07px;color:#747474;font-weight:400;">Brandon - Personal\Documents</div>
<svg class="abs" style="left:181px;top:300.2px" width="13.2" height="10.2" viewBox="0 0 13.2 10.2"><rect width="13.2" height="10.2" fill="#b03040"/><rect x="0" y="0" width="13.2" height="4" fill="#d88a80"/><rect x="3" y="1" width="4" height="5" fill="#902030"/><rect x="8.5" y="0.5" width="4" height="3.5" fill="#f0c8b8"/><rect x="0" y="7" width="13.2" height="3.2" fill="#80202c"/></svg>
<svg class="abs" style="left:170px;top:300.9px" width="9" height="9" viewBox="0 0 9 9"><circle cx="4.5" cy="4.5" r="3.55" fill="#f4faf6" stroke="#587a68" stroke-width=".9"/><path d="M2.5 4.3L4 5.9L6.5 3.1" fill="none" stroke="#4a6c5a" stroke-width="1"/></svg>
<div class="t" style="left:201.9px;top:300.70px;font-size:8.30px;color:#1b1b1b;font-weight:400;">Uhura</div>
<div class="t" style="left:369.5px;top:300.70px;font-size:8.52px;color:#1b1b1b;font-weight:400;">6/7/2022 2:45 PM</div>
<div class="t" style="left:481.6px;top:300.70px;font-size:8.07px;color:#747474;font-weight:400;">Brandon - Personal\Pictures\Star Trek Filez</div>
<svg class="abs" style="left:181px;top:319.3px" width="13.2" height="10.2" viewBox="0 0 13.2 10.2"><rect width="13.2" height="9.6" fill="#22140e"/><rect x="5" y="1" width="4" height="8.6" fill="#2a3a8a"/><rect x="6" y="2" width="2" height="5" fill="#3a4ab0"/><rect x="1" y="3" width="3" height="4" fill="#5a3a20"/></svg>
<svg class="abs" style="left:170px;top:320.0px" width="9" height="9" viewBox="0 0 9 9"><circle cx="4.5" cy="4.5" r="3.55" fill="#f4faf6" stroke="#587a68" stroke-width=".9"/><path d="M2.5 4.3L4 5.9L6.5 3.1" fill="none" stroke="#4a6c5a" stroke-width="1"/></svg>
<div class="t" style="left:201.9px;top:319.80px;font-size:8.30px;color:#1b1b1b;font-weight:400;">Spock</div>
<div class="t" style="left:369.5px;top:319.80px;font-size:8.52px;color:#1b1b1b;font-weight:400;">6/7/2022 2:44 PM</div>
<div class="t" style="left:481.6px;top:319.80px;font-size:8.07px;color:#747474;font-weight:400;">Brandon - Personal\Pictures\Star Trek Filez</div>
<svg class="abs" style="left:181px;top:338.2px" width="13.2" height="10.2" viewBox="0 0 13.2 10.2"><rect width="13.2" height="9.7" fill="#24140c"/><rect x="4" y="2" width="3" height="7.7" fill="#b08848"/><rect x="7.5" y="1" width="2" height="8.7" fill="#d0b070"/><rect x="1" y="4" width="2" height="4" fill="#604020"/><rect x="10" y="3" width="2" height="5" fill="#503018"/></svg>
<svg class="abs" style="left:170px;top:338.9px" width="9" height="9" viewBox="0 0 9 9"><circle cx="4.5" cy="4.5" r="3.55" fill="#f4faf6" stroke="#587a68" stroke-width=".9"/><path d="M2.5 4.3L4 5.9L6.5 3.1" fill="none" stroke="#4a6c5a" stroke-width="1"/></svg>
<div class="t" style="left:201.9px;top:338.70px;font-size:8.30px;color:#1b1b1b;font-weight:400;">Captain Pike</div>
<div class="t" style="left:369.5px;top:338.70px;font-size:8.52px;color:#1b1b1b;font-weight:400;">6/7/2022 2:44 PM</div>
<div class="t" style="left:481.6px;top:338.70px;font-size:8.07px;color:#747474;font-weight:400;">Brandon - Personal\Pictures\Star Trek Filez</div>
<svg class="abs" style="left:181.5px;top:356.1px" width="14" height="14" viewBox="0 0 14 14"><path d="M3 .5H10L13.5 4V13.5H3Z" fill="#fff" stroke="#c8c8c8" stroke-width=".5"/><path d="M10 .5V4H13.5" fill="#f2f2f2" stroke="#c8c8c8" stroke-width=".5"/><rect x="0" y="3.6" width="7.2" height="7.2" rx=".6" fill="#2a5aad"/><text x="3.6" y="9.2" font-size="5.6" font-weight="700" text-anchor="middle" fill="#fff" font-family="Liberation Sans">W</text><path d="M8.5 6H11.5M8.5 8H11.5" stroke="#2a5aad" stroke-width=".6" opacity=".5"/></svg>
<svg class="abs" style="left:170px;top:358.0px" width="9" height="9" viewBox="0 0 9 9"><circle cx="4.5" cy="4.5" r="3.55" fill="#f4faf6" stroke="#587a68" stroke-width=".9"/><path d="M2.5 4.3L4 5.9L6.5 3.1" fill="none" stroke="#4a6c5a" stroke-width="1"/></svg>
<div class="t" style="left:201.9px;top:357.80px;font-size:8.30px;color:#1b1b1b;font-weight:400;">Brandon&#39;s Star Trek Script</div>
<div class="t" style="left:369.5px;top:357.80px;font-size:8.52px;color:#1b1b1b;font-weight:400;">4/5/2022 12:39 PM</div>
<div class="t" style="left:481.6px;top:357.80px;font-size:8.07px;color:#747474;font-weight:400;">Brandon LeBlanc&#39;s OneDrive</div>
<svg class="abs" style="left:181.5px;top:375.3px" width="14" height="14" viewBox="0 0 14 14"><path d="M3 .5H10L13.5 4V13.5H3Z" fill="#fff" stroke="#c8c8c8" stroke-width=".5"/><path d="M10 .5V4H13.5" fill="#f2f2f2" stroke="#c8c8c8" stroke-width=".5"/><rect x="0" y="3.6" width="7.2" height="7.2" rx=".6" fill="#2a5aad"/><text x="3.6" y="9.2" font-size="5.6" font-weight="700" text-anchor="middle" fill="#fff" font-family="Liberation Sans">W</text><path d="M8.5 6H11.5M8.5 8H11.5" stroke="#2a5aad" stroke-width=".6" opacity=".5"/></svg>
<svg class="abs" style="left:170.6px;top:377.5px" width="9" height="8" viewBox="0 0 9 8"><path d="M2.3 6.4A1.8 1.8 0 0 1 2 2.9A2.6 2.6 0 0 1 6.8 2.5A2 2 0 0 1 7.2 6.4Z" fill="none" stroke="#6a7f95" stroke-width=".75"/></svg>
<div class="t" style="left:201.9px;top:377.00px;font-size:8.30px;color:#1b1b1b;font-weight:400;">First Windows 11 Flight Blog Post</div>
<div class="t" style="left:369.5px;top:377.00px;font-size:8.52px;color:#1b1b1b;font-weight:400;">6/24/2021 8:17 PM</div>
<div class="t" style="left:481.6px;top:377.00px;font-size:8.07px;color:#747474;font-weight:400;">Brandon LeBlanc&#39;s OneDrive</div>
<div class="t" style="left:10px;top:428.50px;font-size:8.18px;color:#333;font-weight:400;">15 items</div>
<svg class="abs" style="left:729.8px;top:428px" width="9" height="8" viewBox="0 0 9 8"><path d="M0 .5H8M0 2.5H8M0 4.5H8M0 6.5H8" stroke="#666" stroke-width=".7"/></svg>
<svg class="abs" style="left:743px;top:428px" width="9" height="8" viewBox="0 0 9 8"><rect x=".6" y=".6" width="7.8" height="6.8" rx="1" fill="none" stroke="#444" stroke-width=".9"/></svg><!--/GEN-->
</div>
</body></html>
